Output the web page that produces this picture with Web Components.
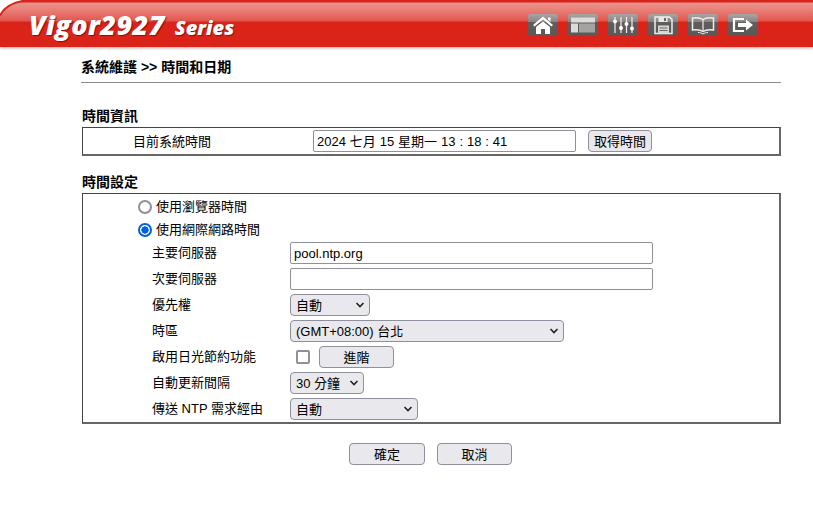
<!DOCTYPE html>
<html>
<head>
<meta charset="utf-8">
<title>Vigor2927</title>
<style>
  html, body { margin: 0; padding: 0; background: #fff; }
  body { font-family: "Liberation Sans", "Noto Sans CJK TC", sans-serif; font-size: 13px; color: #000; }
</style>
</head>
<body>
<router-header></router-header>
<time-page></time-page>

<template id="tpl-header">
  <style>
    :host { display: block; height: 51px; position: relative; overflow: hidden; }
    .bar { height: 47px; position: relative;
      background: linear-gradient(#d9241b 0, #d9241b 2px, #eb938d 3px, #e87f78 10px, #e2564d 21px, #db2419 22px, #db2419 100%);
      box-shadow: 0 1px 3px rgba(0,0,0,.35); display: flex; align-items: center; }
    .corner { position: absolute; left: 0; top: 0; }
    .logo { position: relative; margin-left: 29px; padding-top: 1px; font-family: "Open Sans", "Liberation Sans", sans-serif; font-style: italic; font-weight: 800; color: #fff; white-space: nowrap; text-shadow: 1px 1px 1px rgba(80,0,0,.6); }
    .logo b { font-size: 27px; font-weight: 800; letter-spacing: .45px; }
    .logo span { font-size: 20px; margin-left: 10px; }
    .icons { margin-left: auto; margin-right: 55px; display: flex; gap: 10px; padding-top: 2px; }
  </style>
  <div class="bar">
    <svg class="corner" width="30" height="20" viewBox="0 0 30 20"><path d="M0 0H25C12 2 4 7 0 15Z" fill="#fff"/><path d="M25 .5C12 2.500 4 7.500 0 15.500" fill="none" stroke="#d9241b" stroke-width="2"/></svg>
    <div class="logo"><b>Vigor2927</b><span>Series</span></div>
    <div class="icons"><slot></slot></div>
  </div>
</template>

<template id="tpl-tool">
  <style>
    :host { display: block; width: 30px; height: 22px; }
    svg { display: block; }
  </style>
  <svg width="30" height="22" viewBox="0 0 30 22"><defs><linearGradient id="g" x1="0" y1="0" x2="0" y2="1"><stop offset="0" stop-color="#aaa4a3"/><stop offset=".34" stop-color="#8b8685"/><stop offset=".38" stop-color="#625d5d"/><stop offset="1" stop-color="#5c5858"/></linearGradient></defs><rect x="0" y="0" width="30" height="22" rx="2.500" fill="url(#g)"/><g id="art"></g></svg>
</template>

<template id="tpl-page">
  <style>
    :host { display: block; width: 700px; margin-left: 81px; }
    .title { font-weight: 700; font-size: 14px; line-height: 16px; padding-top: 8px; height: 23px; border-bottom: 1px solid #8a8a8a; }
    .foot { display: flex; justify-content: center; gap: 12px; margin-top: 19px; padding-right: 1px; }
    .cap { margin-left: 50px; width: 180px; padding-bottom: 2px; }
  </style>
  <div class="title">系統維護 &gt;&gt; 時間和日期</div>
  <form-section heading="時間資訊" style="margin-top:26px">
    <div style="display:flex;align-items:center;height:26px">
      <span class="cap">目前系統時間</span>
      <text-box value="2024 七月 15 星期一 13 : 18 : 41" style="width:263px"></text-box>
      <push-button style="width:64px;height:22px;margin-left:12px">取得時間</push-button>
    </div>
  </form-section>
  <form-section heading="時間設定" style="margin-top:19px">
    <div style="height:228px;padding-left:55px;padding-top:1px;box-sizing:border-box">
      <radio-row>使用瀏覽器時間</radio-row>
      <radio-row checked style="margin-bottom:-1px">使用網際網路時間</radio-row>
      <field-row label="主要伺服器"><text-box value="pool.ntp.org" style="width:363px"></text-box></field-row>
      <field-row label="次要伺服器"><text-box style="width:363px"></text-box></field-row>
      <field-row label="優先權"><drop-down style="width:80px">自動</drop-down></field-row>
      <field-row label="時區"><drop-down style="width:274px">(GMT+08:00) 台北</drop-down></field-row>
      <field-row label="啟用日光節約功能"><check-box></check-box><push-button style="width:75px;height:22px;margin-left:9px">進階</push-button></field-row>
      <field-row label="自動更新間隔"><drop-down style="width:74px">30 分鐘</drop-down></field-row>
      <field-row label="傳送 NTP 需求經由"><drop-down style="width:128px">自動</drop-down></field-row>
    </div>
  </form-section>
  <div class="foot">
    <push-button style="width:76px;height:22px">確定</push-button>
    <push-button style="width:75px;height:22px">取消</push-button>
  </div>
</template>

<template id="tpl-section">
  <style>
    :host { display: block; }
    h3 { margin: -1px 1px 3px; font-size: 14px; line-height: 16px; font-weight: 700; }
    .box { margin-left: 1px; border-style: solid; border-width: 1px 2px 2px 1px; border-color: #444 #666 #666 #444; background: #fff; }
  </style>
  <h3 id="h"></h3>
  <div class="box"><slot></slot></div>
</template>

<template id="tpl-radio">
  <style>
    :host { display: flex; align-items: center; height: 23px; }
    .r { width: 14px; height: 14px; border-radius: 50%; border: 2px solid #8f8f9d; box-sizing: border-box; margin-right: 4px; background: #fff; display: flex; align-items: center; justify-content: center; }
    :host([checked]) .r { border-color: #0060df; background: radial-gradient(circle, #0060df 0 3.4px, #fff 3.9px); }
    .t { margin-top: -1px; padding-bottom: 1px; }
  </style>
  <span class="r"></span><span class="t"><slot></slot></span>
</template>

<template id="tpl-field">
  <style>
    :host { display: flex; align-items: center; height: 26px; margin-left: 14px; }
    .l { width: 138px; flex: none; white-space: nowrap; padding-bottom: 3px; }
    .v { display: flex; align-items: center; }
  </style>
  <span class="l" id="l"></span><span class="v"><slot></slot></span>
</template>

<template id="tpl-text">
  <style>
    :host { display: block; height: 22px; box-sizing: border-box; border: 1px solid #8f8f9d; border-radius: 2px; padding: 1px 3px 0; background: #fff; }
    div { line-height: 19px; white-space: nowrap; overflow: hidden; word-spacing: .3px; }
  </style>
  <div id="t"></div>
</template>

<template id="tpl-button">
  <style>
    :host { display: flex; align-items: center; justify-content: center; box-sizing: border-box; border: 1px solid #8f8f9d; border-radius: 4px; background: #e9e9ed; padding-bottom: 1px; }
  </style>
  <slot></slot>
</template>

<template id="tpl-select">
  <style>
    :host { display: flex; align-items: center; height: 22px; box-sizing: border-box; border: 1px solid #8f8f9d; border-radius: 4px; background: #e9e9ed; padding-left: 5px; padding-bottom: 1px; position: relative; white-space: nowrap; }
    svg { position: absolute; right: 4px; top: 7px; }
  </style>
  <slot></slot>
  <svg width="10" height="6" viewBox="0 0 10 6"><path d="M1.500 1 5 4.500 8.500 1" fill="none" stroke="#222" stroke-width="1.600"/></svg>
</template>

<template id="tpl-check">
  <style>
    :host { display: block; width: 14px; height: 14px; box-sizing: border-box; border: 2px solid #8f8f9d; border-radius: 2px; background: #fff; margin-left: 6px; }
  </style>
</template>

<script>
  function shadow(el, id) {
    const root = el.attachShadow({ mode: 'open' });
    root.appendChild(document.getElementById(id).content.cloneNode(true));
    return root;
  }

  // white pictograms for the six toolbar buttons
  const toolArt = {
    home: '<path d="M20 3.500h2.500v4L20 5.500Z" fill="#fff"/><path d="M15 2.500 5 11l1.500 1.500L15 5.500l8.500 7L25 11Z" fill="#fff"/><path d="M8 13 15 7.500 22 13v7h-5v-5h-4v5H8Z" fill="#fff"/>',
    layout: '<path d="M3 3.500h24v5H3Z" fill="#dcdada"/><path d="M3 9.500h7v9H3Z" fill="#dcdada"/><path d="M11 9.500h16v9H11Z" fill="#a5a2a2"/>',
    mixer: '<path d="M7 3v16M13 3v16M18.500 3v16M24 3v16" stroke="#eee" stroke-width="1.200"/><rect x="5" y="5.500" width="4" height="4" rx="2" fill="#fff"/><rect x="11" y="12" width="4" height="4" rx="2" fill="#fff"/><rect x="16.500" y="8" width="4" height="4" rx="2" fill="#fff"/><rect x="22" y="12.500" width="4" height="4" rx="2" fill="#fff"/>',
    save: '<path d="M7 3h14.500L24 5.500V19.500H7Z" fill="none" stroke="#eee" stroke-width="1.500"/><path d="M10.500 3h9v5h-9Z" fill="#e8e8e8"/><path d="M16 4h2v3h-2Z" fill="#666"/><path d="M10 11.500h11v8H10Z" fill="#d8d6d6"/><path d="M11.500 14h8M11.500 16.500h8" stroke="#666" stroke-width="1"/>',
    book: '<path d="M15 5.500C12 3.500 8 3.500 4.500 4v12c3.500-.5 7.500-.5 10.500 1.500 3-2 7-2 10.500-1.500V4C22 3.500 18 3.500 15 5.500Z" fill="none" stroke="#eee" stroke-width="1.500"/><path d="M15 5.500v12" stroke="#eee" stroke-width="1.200"/><path d="M10 18.500c2 0 3.500.5 5 1.500 1.500-1 3-1.500 5-1.500" fill="none" stroke="#eee" stroke-width="1"/>',
    logout: '<path d="M16 5H6v12h10" fill="none" stroke="#fff" stroke-width="2.200"/><path d="M10 9h8V5.500l7 5.500-7 5.500V13h-8Z" fill="#fff"/>'
  };

  class RouterHeader extends HTMLElement {
    connectedCallback() {
      shadow(this, 'tpl-header');
      for (const name of Object.keys(toolArt)) {
        const t = document.createElement('tool-icon');
        t.setAttribute('name', name);
        this.appendChild(t);
      }
    }
  }
  class ToolIcon extends HTMLElement {
    connectedCallback() {
      const root = shadow(this, 'tpl-tool');
      root.getElementById('art').innerHTML = toolArt[this.getAttribute('name')];
    }
  }
  class TimePage extends HTMLElement {
    connectedCallback() { shadow(this, 'tpl-page'); }
  }
  class FormSection extends HTMLElement {
    connectedCallback() {
      const root = shadow(this, 'tpl-section');
      root.getElementById('h').textContent = this.getAttribute('heading');
    }
  }
  class RadioRow extends HTMLElement {
    connectedCallback() { shadow(this, 'tpl-radio'); }
  }
  class FieldRow extends HTMLElement {
    connectedCallback() {
      const root = shadow(this, 'tpl-field');
      root.getElementById('l').textContent = this.getAttribute('label');
    }
  }
  class TextBox extends HTMLElement {
    connectedCallback() {
      const root = shadow(this, 'tpl-text');
      root.getElementById('t').textContent = this.getAttribute('value') || '';
    }
  }
  class PushButton extends HTMLElement {
    connectedCallback() { shadow(this, 'tpl-button'); }
  }
  class DropDown extends HTMLElement {
    connectedCallback() { shadow(this, 'tpl-select'); }
  }
  class CheckBox extends HTMLElement {
    connectedCallback() { shadow(this, 'tpl-check'); }
  }

  customElements.define('router-header', RouterHeader);
  customElements.define('tool-icon', ToolIcon);
  customElements.define('time-page', TimePage);
  customElements.define('form-section', FormSection);
  customElements.define('radio-row', RadioRow);
  customElements.define('field-row', FieldRow);
  customElements.define('text-box', TextBox);
  customElements.define('push-button', PushButton);
  customElements.define('drop-down', DropDown);
  customElements.define('check-box', CheckBox);
</script>
</body>
</html>
